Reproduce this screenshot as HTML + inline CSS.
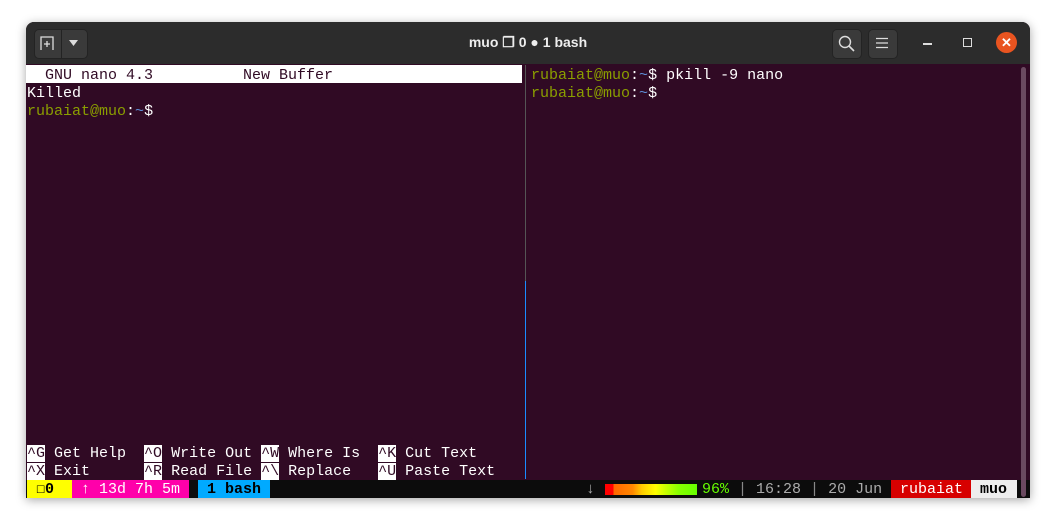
<!DOCTYPE html>
<html><head><style>
body{margin:0;width:1056px;height:527px;background:#fff;position:relative;overflow:hidden;font-family:"Liberation Mono",monospace;}
.win{position:absolute;left:26px;top:22px;width:1004px;height:476px;border-radius:8px 8px 0 0;background:#300a24;box-shadow:0 2px 10px rgba(0,0,0,.35);overflow:hidden}
.tb{position:absolute;left:0;top:0;width:1004px;height:42px;background:#2c2c2c}
.btn{position:absolute;top:7px;height:28px;background:#3a3a3a;border-radius:5px;border:1px solid #232323}
.title{position:absolute;left:0;right:0;top:12px;text-align:center;color:#eee;font:bold 14px "Liberation Sans",sans-serif}
.t{position:absolute;font-size:15px;line-height:18px;white-space:pre;color:#fff}
.g{color:#8a9e00}.b{color:#5e8fd8}
.k{background:#fff;color:#300a24}
.s{position:absolute;top:458px;height:18px;font-size:15px;line-height:19px;white-space:pre;font-weight:normal}
</style></head><body>
<div class="win">
 <div class="tb">
  <div class="btn" style="left:8px;width:52px"></div>
  <div style="position:absolute;left:35px;top:8px;width:1px;height:28px;background:#232323"></div>
  <svg style="position:absolute;left:13px;top:13px" width="16" height="16"><path d="M2 15V2h12v13M8 6v6M5 9h6" stroke="#ddd" fill="none" stroke-width="1.3"/></svg>
  <svg style="position:absolute;left:43px;top:18px" width="10" height="6"><path d="M0 0h9L4.5 6z" fill="#ddd"/></svg>
  <div class="title">muo ❐ 0 ● 1 bash</div>
  <div class="btn" style="left:806px;width:28px"></div>
  <svg style="position:absolute;left:812px;top:13px" width="17" height="17"><circle cx="7" cy="7" r="5.5" stroke="#ddd" fill="none" stroke-width="1.4"/><path d="M11 11l5 5" stroke="#ddd" stroke-width="1.6"/></svg>
  <div class="btn" style="left:842px;width:28px"></div>
  <svg style="position:absolute;left:849px;top:15px" width="14" height="12"><path d="M1 1.5h12M1 6h12M1 10.5h12" stroke="#ddd" stroke-width="1.3"/></svg>
  <div style="position:absolute;left:897px;top:21px;width:9px;height:1.5px;background:#ddd"></div>
  <div style="position:absolute;left:937px;top:16px;width:7px;height:7px;border:1.5px solid #ddd"></div>
  <div style="position:absolute;left:970px;top:10px;width:21px;height:21px;border-radius:50%;background:#e95420;color:#fff;font:bold 13px 'Liberation Sans';text-align:center;line-height:21px">✕</div>
 </div>
 <div style="position:absolute;left:0;top:43px;width:496px;height:18px;background:#fff"></div>
 <div class="t" style="left:1px;top:45px;color:#300a24">  GNU nano 4.3          New Buffer</div>
 <div class="t" style="left:1px;top:63px">Killed</div>
 <div class="t" style="left:1px;top:81px"><span class="g">rubaiat@muo</span>:<span class="b">~</span>$</div>
 <div class="t" style="left:505px;top:45px"><span class="g">rubaiat@muo</span>:<span class="b">~</span>$ pkill -9 nano</div>
 <div class="t" style="left:505px;top:63px"><span class="g">rubaiat@muo</span>:<span class="b">~</span>$</div>
 <div style="position:absolute;left:499px;top:43px;width:1px;height:216px;background:#555"></div>
 <div style="position:absolute;left:499px;top:259px;width:1px;height:198px;background:#1a8cff"></div>
 <div class="t" style="left:1px;top:423px"><span class="k">^G</span> Get Help  <span class="k">^O</span> Write Out <span class="k">^W</span> Where Is  <span class="k">^K</span> Cut Text</div>
 <div class="t" style="left:1px;top:441px"><span class="k">^X</span> Exit      <span class="k">^R</span> Read File <span class="k">^\</span> Replace   <span class="k">^U</span> Paste Text</div>
 <div style="position:absolute;left:0;top:458px;width:1004px;height:18px;background:#0c0c0c"></div>
 <div class="s" style="left:1px;width:45px;background:#ffff00;color:#000"> ☐<b>0</b></div>
 <div class="s" style="left:46px;width:117px;background:#ff00aa;color:#fff"> ↑ 13d 7h 5m</div>
 <div class="s" style="left:172px;width:72px;background:#00aaff;color:#000;font-weight:bold"> 1 bash</div>
 <div class="s" style="left:560px;color:#aaa">↓</div>
 <div style="position:absolute;left:579px;top:462px;width:92px;height:11px;background:linear-gradient(90deg,#f00 0,#f00 9%,#f60 9%,#f80 30%,#fc0 40%,#ff0 55%,#cf0 65%,#8f0 80%,#6f0 100%)"></div>
 <div class="s" style="left:676px;color:#6f0">96% <span style="color:#888">|</span><span style="color:#aaa"> 16:28 </span><span style="color:#888">|</span><span style="color:#aaa"> 20 Jun</span></div>
 <div class="s" style="left:865px;width:80px;background:#d70000;color:#fff"> rubaiat</div>
 <div class="s" style="left:945px;width:46px;background:#eee;color:#000;font-weight:bold"> muo</div>
 <div style="position:absolute;left:995px;top:45px;width:5px;height:430px;background:#6a4a60;border-radius:3px"></div>
</div>
</body></html>
